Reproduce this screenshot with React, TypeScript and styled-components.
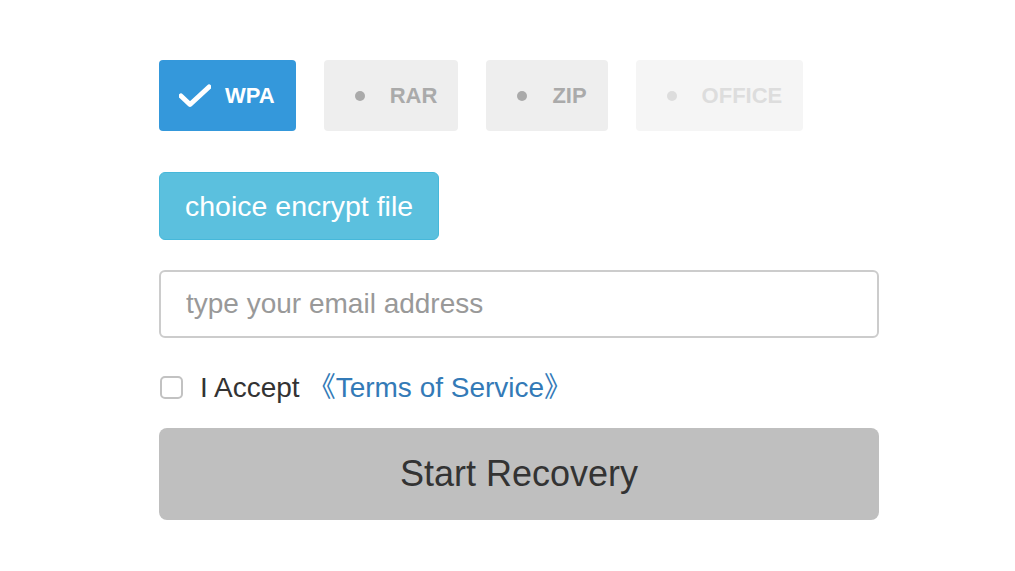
import React, { useState } from "react";
import styled, { createGlobalStyle } from "styled-components";

const GlobalStyle = createGlobalStyle`
  body {
    margin: 0;
    background: #ffffff;
    font-family: "Liberation Sans", Arial, sans-serif;
  }
`;

const Page = styled.div`
  padding: 60px 0 0 159px;
`;

const Form = styled.div`
  width: 720px;
  display: flex;
  flex-direction: column;
`;

const Tabs = styled.div`
  display: flex;
  gap: 28px;
  height: 71px;
`;

const Tab = styled.div<{ $active?: boolean; $disabled?: boolean }>`
  display: flex;
  align-items: center;
  gap: 14px;
  padding: 0 21px 0 20px;
  border-radius: 4px;
  font-size: 22px;
  font-weight: 700;
  background: ${(p) => (p.$active ? "#3498db" : p.$disabled ? "#f5f5f5" : "#eeeeee")};
  color: ${(p) => (p.$active ? "#ffffff" : p.$disabled ? "#dddddd" : "#aaaaaa")};
  cursor: pointer;
`;

const IconSlot = styled.span`
  width: 32px;
  height: 24px;
  display: flex;
  align-items: center;
  justify-content: center;
`;

const Dot = styled.span<{ $disabled?: boolean }>`
  width: 10px;
  height: 10px;
  border-radius: 50%;
  background: ${(p) => (p.$disabled ? "#dddddd" : "#aaaaaa")};
`;

const FileButton = styled.button`
  align-self: flex-start;
  margin-top: 41px;
  height: 68px;
  padding: 0 25px;
  border: 1px solid #46b8da;
  border-radius: 6px;
  background: #5bc0de;
  color: #ffffff;
  font-family: "Liberation Sans", Arial, sans-serif;
  font-size: 28.5px;
`;

const EmailInput = styled.input`
  margin-top: 30px;
  height: 68px;
  box-sizing: border-box;
  width: 100%;
  padding: 0 25px;
  border: 2px solid #cccccc;
  border-radius: 6px;
  font-family: "Liberation Sans", Arial, sans-serif;
  font-size: 28px;
  color: #333333;
  outline: none;
  &::placeholder {
    color: #999999;
  }
`;

const AcceptRow = styled.label`
  margin-top: 32px;
  display: flex;
  align-items: center;
  height: 36px;
  cursor: pointer;
`;

const Check = styled.span<{ $checked: boolean }>`
  flex: none;
  width: 23px;
  height: 23px;
  box-sizing: border-box;
  border: 2px solid #c2c2c2;
  border-radius: 5px;
  margin: -1px 17px 0 1px;
  background: ${(p) => (p.$checked ? "#3498db" : "#ffffff")};
`;

const AcceptText = styled.span`
  font-size: 28px;
  line-height: 36px;
  color: #333333;
  white-space: nowrap;
`;

const TermsLink = styled.a`
  margin-left: 8px;
  color: #337ab7;
  text-decoration: none;
  font-family: "Liberation Sans", "Noto Sans CJK SC", sans-serif;
`;

const StartButton = styled.button`
  margin-top: 22px;
  height: 92px;
  width: 100%;
  border: none;
  border-radius: 8px;
  background: #bfbfbf;
  color: #333333;
  font-family: "Liberation Sans", Arial, sans-serif;
  font-size: 36px;
`;

const CheckIcon = () => (
  <svg width="32" height="24" viewBox="0 0 32 24">
    <polyline
      points="2,12 11,20.5 30,3"
      fill="none"
      stroke="#ffffff"
      strokeWidth="5"
      strokeLinecap="round"
      strokeLinejoin="round"
    />
  </svg>
);

const types = [
  { name: "WPA", disabled: false },
  { name: "RAR", disabled: false },
  { name: "ZIP", disabled: false },
  { name: "OFFICE", disabled: true },
];

export default function App() {
  const [selected, setSelected] = useState("WPA");
  const [accepted, setAccepted] = useState(false);

  return (
    <Page>
      <GlobalStyle />
      <Form>
        <Tabs>
          {types.map((t) => {
            const active = t.name === selected;
            return (
              <Tab
                key={t.name}
                $active={active}
                $disabled={t.disabled}
                onClick={() => !t.disabled && setSelected(t.name)}
              >
                <IconSlot>{active ? <CheckIcon /> : <Dot $disabled={t.disabled} />}</IconSlot>
                {t.name}
              </Tab>
            );
          })}
        </Tabs>
        <FileButton>choice encrypt file</FileButton>
        <EmailInput placeholder="type your email address" />
        <AcceptRow onClick={() => setAccepted(!accepted)}>
          <Check $checked={accepted} />
          <AcceptText>
            I Accept
            <TermsLink href="#">《Terms of Service》</TermsLink>
          </AcceptText>
        </AcceptRow>
        <StartButton>Start Recovery</StartButton>
      </Form>
    </Page>
  );
}
